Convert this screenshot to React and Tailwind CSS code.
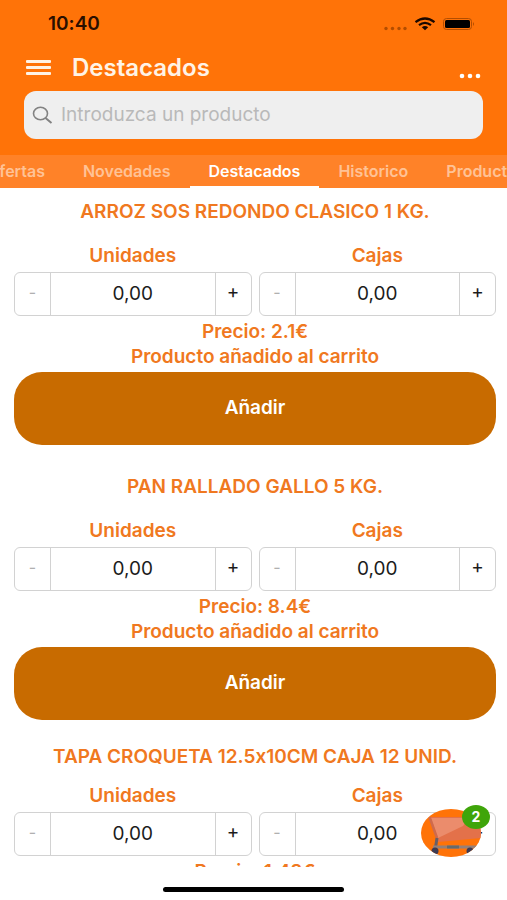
import React, { useState } from "react";

const TABS = ["Ofertas", "Novedades", "Destacados", "Historico", "Productos"];

const PRODUCTS = [
  { id: 1, name: "ARROZ SOS REDONDO CLASICO 1 KG.", price: "2.1", added: true },
  { id: 2, name: "PAN RALLADO GALLO 5 KG.", price: "8.4", added: true },
  { id: 3, name: "TAPA CROQUETA 12.5x10CM CAJA 12 UNID.", price: "1.48", added: false },
];

const formatQty = (n) => n.toFixed(2).replace(".", ",");

const StatusBar = () => (
  <div className="flex h-12 items-center justify-between pl-12 pr-8">
    <span className="text-[19px] font-semibold text-[#2b0f00]">10:40</span>
    <svg width="92" height="16" viewBox="0 0 92 16" aria-hidden="true">
      <g fill="#b34d00">
        <circle cx="3" cy="12.5" r="1.7" />
        <circle cx="9.5" cy="12.5" r="1.7" />
        <circle cx="16" cy="12.5" r="1.7" />
        <circle cx="22" cy="12.5" r="1.7" />
      </g>
      <g fill="none" stroke="#1a0800" strokeWidth="2.2">
        <path d="M32.5 6.2 Q42 -1.2 51.5 6.2" />
        <path d="M36 9.2 Q42 4.6 48 9.2" />
      </g>
      <path d="M38.8 11.2 Q42 9 45.2 11.2 L42 14.2 Z" fill="#1a0800" />
      <rect x="60.5" y="2.5" width="28" height="11" rx="3" fill="none" stroke="#b34d00" />
      <rect x="62" y="4" width="25" height="8" rx="1.5" fill="#000" />
      <path d="M90 6 Q92 8 90 10 Z" fill="#b34d00" />
    </svg>
  </div>
);

const Stepper = ({ id, label }) => {
  const [value, setValue] = useState(0);

  return (
    <div className="flex min-w-0 flex-1 flex-col gap-1">
      <label htmlFor={id} className="text-center leading-6">
        {label}
      </label>
      <div className="flex h-11 rounded-md border border-[#d2d2d2] bg-white font-normal text-[#1c1c1c]">
        <button
          type="button"
          aria-label={`Restar ${label}`}
          className="w-9 shrink-0 border-r border-[#d2d2d2] pb-1 text-base text-[#b0b0b0]"
          onClick={() => setValue(Math.max(0, value - 1))}
        >
          -
        </button>
        <input
          id={id}
          type="text"
          value={formatQty(value)}
          readOnly
          className="w-full min-w-0 text-center outline-none"
        />
        <button
          type="button"
          aria-label={`Sumar ${label}`}
          className="w-9 shrink-0 border-l border-[#d2d2d2] pb-1"
          onClick={() => setValue(value + 1)}
        >
          +
        </button>
      </div>
    </div>
  );
};

const Product = ({ product }) => (
  <article className="pb-[18px] text-center text-[19px] font-semibold text-[#f07820]">
    <h2 className={`flex items-center justify-center whitespace-nowrap ${product.added ? "h-12" : "h-[38px]"}`}>
      {product.name}
    </h2>
    <div className="mt-2 flex gap-[7px]">
      <Stepper id={`unidades-${product.id}`} label="Unidades" />
      <Stepper id={`cajas-${product.id}`} label="Cajas" />
    </div>
    <div className="py-[3px] leading-[25px]">
      <p>Precio: {product.price}€</p>
      {product.added && <p>Producto añadido al carrito</p>}
    </div>
    <button type="button" className="h-[73px] w-full rounded-[28px] bg-[#c86b00] text-white">
      Añadir
    </button>
  </article>
);

const CartButton = () => (
  <button type="button" aria-label="Ver carrito" className="absolute right-[26px] bottom-[10px] h-12 w-[60px]">
    <svg width="60" height="48" viewBox="0 0 60 48" aria-hidden="true">
      <defs>
        <clipPath id="cart-clip">
          <ellipse cx="30" cy="24" rx="30" ry="24" />
        </clipPath>
      </defs>
      <g clipPath="url(#cart-clip)">
        <rect width="60" height="48" fill="#ff7308" />
        <path d="M9 8 L60 8 L60 29 L17 33 Z" fill="#e3714a" />
        <path d="M10 9 L48 9 L42 17 L17 29 Z" fill="#eb8c6c" />
        <path d="M8.5 8 L16 29" fill="none" stroke="#cf6a4c" strokeWidth="2.5" />
        <path d="M16 29 L14 42" stroke="#665f68" strokeWidth="3" />
        <path d="M12 38 H56" stroke="#968078" strokeWidth="3" />
        <path d="M26 38 H38" stroke="#666b6c" strokeWidth="3" />
        <circle cx="14" cy="42" r="3.5" fill="#3c3a52" />
        <circle cx="49" cy="42" r="3.5" fill="#3c3a52" />
      </g>
    </svg>
    <span className="absolute -top-1 -right-[9px] flex h-6 w-7 items-center justify-center rounded-[50%] bg-[#3fa50a] text-sm font-bold text-white">
      2
    </span>
  </button>
);

export default function App() {
  const [active, setActive] = useState("Destacados");

  return (
    <div className="flex h-screen flex-col overflow-hidden bg-white font-['Inter',sans-serif] [font-feature-settings:'calt'_0]">
      <header className="shrink-0 bg-[#ff7308]">
        <StatusBar />
        <div className="flex h-[43px] items-center px-[26px] pb-1 text-white">
          <button type="button" aria-label="Menú">
            <svg width="25" height="16" viewBox="0 0 25 16" fill="#fff3e6">
              <rect width="25" height="3" rx="1" />
              <rect y="6" width="25" height="3" rx="1" />
              <rect y="12" width="25" height="3" rx="1" />
            </svg>
          </button>
          <h1 className="ml-[21px] flex-1 text-2xl font-semibold text-[#fff3e6]">Destacados</h1>
          <button type="button" aria-label="Más opciones" className="self-end pb-2">
            <svg width="22" height="6" viewBox="0 0 22 6" fill="#fff" className="block">
              <circle cx="3" cy="3" r="2.3" />
              <circle cx="11" cy="3" r="2.3" />
              <circle cx="19" cy="3" r="2.3" />
            </svg>
          </button>
        </div>
        <div className="px-6 pb-4">
          <label className="flex h-12 items-center gap-2 rounded-xl bg-[#efefef] px-2">
            <svg width="21" height="18" viewBox="0 0 21 18" fill="none" stroke="#828282" strokeWidth="1.6" className="shrink-0" aria-hidden="true">
              <ellipse cx="8.5" cy="7.5" rx="7" ry="6.3" />
              <path d="M13.5 12 L19.5 17" strokeWidth="2" />
            </svg>
            <input
              type="text"
              aria-label="Buscar producto"
              placeholder="Introduzca un producto"
              className="w-full min-w-0 bg-transparent text-[19px] outline-none placeholder:text-[#b9b9b9]"
            />
          </label>
        </div>
        <nav className="flex h-[33px] overflow-hidden bg-[#ff8228]">
          <div className="-ml-8 flex">
            {TABS.map((tab) => (
              <button
                key={tab}
                type="button"
                onClick={() => setActive(tab)}
                className={`border-b-2 px-[19px] text-base font-semibold ${
                  tab === active ? "border-white text-white" : "border-transparent text-[#ffc296]"
                }`}
              >
                {tab}
              </button>
            ))}
          </div>
        </nav>
      </header>

      <div className="relative min-h-0 flex-1">
        <main className="h-full overflow-hidden pr-[11px] pl-[14px]">
          {PRODUCTS.map((product) => (
            <Product key={product.id} product={product} />
          ))}
        </main>
        <CartButton />
      </div>

      <footer className="flex h-[33px] shrink-0 justify-center pt-5">
        <div className="h-[5px] w-[181px] rounded-full bg-black" />
      </footer>
    </div>
  );
}
